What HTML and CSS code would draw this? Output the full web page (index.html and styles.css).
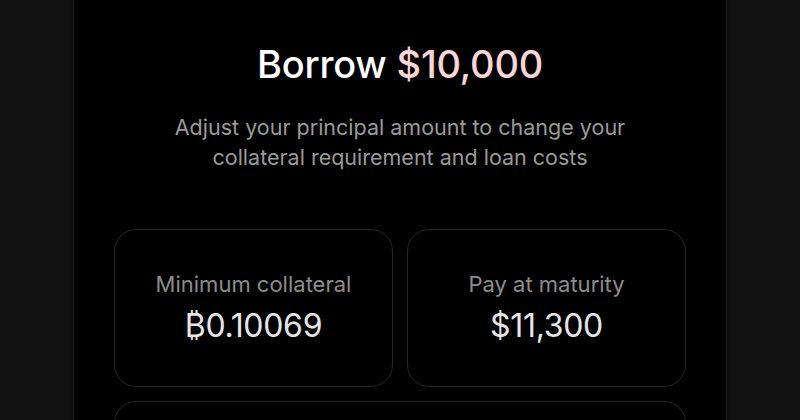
FILE: index.html
```html
<!DOCTYPE html>
<html lang="en">
<head>
    <meta charset="UTF-8">
    <meta name="viewport" content="width=device-width, initial-scale=1.0">
    <title>Borrow</title>
    <link rel="stylesheet" href="styles.css">
</head>
<body>
    <div class="panel">
        <h1 class="title">Borrow <span class="amount">$10,000</span></h1>
        <p class="subtitle">Adjust your principal amount to change your<br>collateral requirement and loan costs</p>

        <div class="stats">
            <div class="stat">
                <div class="stat-label">Minimum collateral</div>
                <div class="stat-value">&#x20BF;0.10069</div>
            </div>
            <div class="stat">
                <div class="stat-label">Pay at maturity</div>
                <div class="stat-value">$11,300</div>
            </div>
            <div class="stat stat-wide"></div>
        </div>
    </div>
</body>
</html>
```

FILE: styles.css
```css
html, body {
    height: 100%;
}

body {
    margin: 0;
    background-color: #111111;
    font-family: Inter, "Noto Sans", sans-serif;
    overflow: hidden;
}

.panel {
    width: 572px;
    min-height: 100%;
    margin: 0 auto;
    padding: 47px 40px 0;
    background-color: #000;
    border-left: 1px solid #1c1c1c;
    border-right: 1px solid #1c1c1c;
    box-shadow: 0 0 6px rgba(0, 0, 0, 0.8);
    box-sizing: content-box;
}

.title {
    margin: 0;
    text-align: center;
    font-size: 38px;
    font-weight: 500;
    line-height: 34px;
    color: #ffffff;
    letter-spacing: -0.2px;
}

.amount {
    color: #fcd6d6;
}

.subtitle {
    margin: 31px 0 0;
    text-align: center;
    font-size: 21.5px;
    line-height: 30px;
    color: #9a9a9a;
}

.stats {
    display: grid;
    grid-template-columns: 1fr 1fr;
    gap: 14px;
    margin-top: 57px;
}

.stat {
    height: 158px;
    border: 1px solid #262626;
    border-radius: 22px;
    display: flex;
    flex-direction: column;
    align-items: center;
    justify-content: center;
    gap: 8px;
    box-sizing: border-box;
}

.stat-wide {
    grid-column: span 2;
}

.stat-label {
    font-size: 22px;
    line-height: 28px;
    color: #8c8c8c;
}

.stat-value {
    font-size: 32px;
    line-height: 40px;
    color: #e6e6e6;
    letter-spacing: -0.3px;
}
```
